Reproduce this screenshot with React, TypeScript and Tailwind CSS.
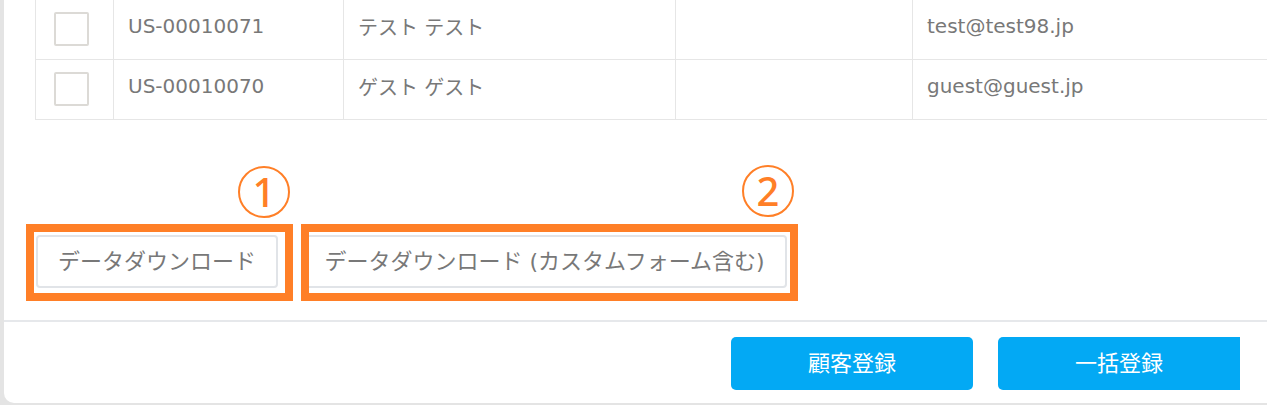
const rows = [
  { id: "US-00010071", name: "テスト テスト", email: "test@test98.jp" },
  { id: "US-00010070", name: "ゲスト ゲスト", email: "guest@guest.jp" },
];

function Row({ id, name, email }: { id: string; name: string; email: string }) {
  return (
    <div className="flex h-[60px] border-b border-[#e6e6e6]">
      <div className="w-[78px] shrink-0 border-r border-[#e6e6e6] pl-[18px] pt-[12px]">
        <div className="h-[34px] w-[35px] rounded-[2px] border-2 border-[#dcdad6] bg-white" />
      </div>
      <div className="w-[230px] shrink-0 border-r border-[#e6e6e6] pl-[14px] pt-[14px] text-[20px] leading-6">{id}</div>
      <div className="w-[332px] shrink-0 border-r border-[#e6e6e6] pl-[14px] pt-[16px] text-[20px] leading-6">{name}</div>
      <div className="w-[237px] shrink-0 border-r border-[#e6e6e6]" />
      <div className="w-[420px] shrink-0 pl-[14px] pt-[14px] text-[20px] leading-6">{email}</div>
    </div>
  );
}

function Marker({ n, className }: { n: string; className: string }) {
  return (
    <div
      className={`absolute flex h-[52px] w-[52px] items-center justify-center rounded-full border-2 border-[#ff7f27] font-['Noto_Sans',sans-serif] text-[40px] leading-none font-medium text-[#ff7f27] ${className}`}
    >
      {n}
    </div>
  );
}

export default function App() {
  return (
    <div className="h-[405px] w-[1267px] overflow-hidden bg-[#e4e4e4] pl-[4px] font-['DejaVu_Sans','Noto_Sans_CJK_JP',sans-serif] text-[#787878]">
      <div className="relative flex h-[403px] flex-col rounded-bl-[10px] bg-white">
        <div className="ml-[31px] flex flex-col border-l border-[#e6e6e6]">
          {rows.map((r) => (
            <Row key={r.id} {...r} />
          ))}
        </div>

        <div className="ml-[32px] mt-[115px] flex gap-[24px]">
          <button className="flex h-[53px] w-[242px] items-center justify-center rounded-[4px] border-2 border-[#e1e4e8] bg-white text-[22px] text-[#787878]">
            データダウンロード
          </button>
          <button className="flex h-[53px] w-[485px] items-center justify-center rounded-[4px] border-2 border-[#e1e4e8] bg-white text-[22px] text-[#787878]">
            データダウンロード (カスタムフォーム含む)
          </button>
        </div>

        <div className="mt-[32px] border-t-2 border-[#e6e8eb]">
          <div className="flex justify-end gap-[25px] pr-[27px] pt-[15px]">
            <button className="flex h-[53px] w-[242px] items-center justify-center rounded-[5px] bg-[#03a9f4] text-[22px] text-white">
              顧客登録
            </button>
            <button className="flex h-[53px] w-[242px] items-center justify-center rounded-l-[5px] bg-[#03a9f4] text-[22px] text-white">
              一括登録
            </button>
          </div>
        </div>

        {/* annotations */}
        <div className="absolute left-[22px] top-[224px] h-[77px] w-[267px] border-8 border-[#ff7f27]" />
        <div className="absolute left-[297px] top-[224px] h-[77px] w-[497px] border-8 border-[#ff7f27]" />
        <Marker n="1" className="left-[234px] top-[166px]" />
        <Marker n="2" className="left-[738px] top-[165px]" />
      </div>
    </div>
  );
}
